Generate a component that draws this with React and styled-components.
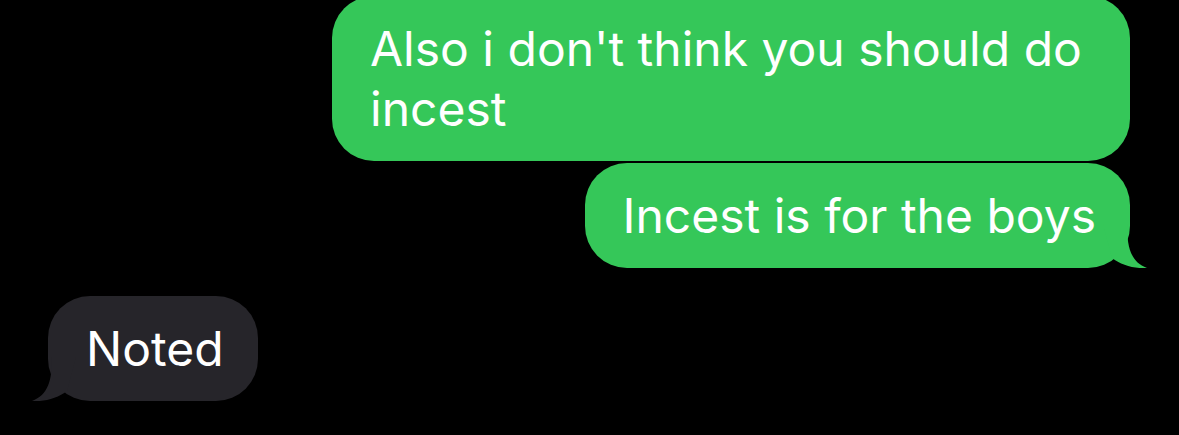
import React from "react";
import styled, { createGlobalStyle } from "styled-components";

const GlobalStyle = createGlobalStyle`
  html, body {
    margin: 0;
    padding: 0;
    background: #000;
  }
`;

const Thread = styled.div`
  width: 1179px;
  height: 435px;
  overflow: hidden;
  background: #000;
  display: flex;
  flex-direction: column;
  font-family: Inter, "Liberation Sans", sans-serif;
`;

const Row = styled.div`
  display: flex;
  justify-content: ${({ $out }) => ($out ? "flex-end" : "flex-start")};
  padding: ${({ $out }) => ($out ? "0 49px 0 0" : "0 0 0 48px")};
  margin-top: ${({ $gap }) => $gap}px;
`;

const Bubble = styled.div`
  position: relative;
  box-sizing: border-box;
  max-width: 798px;
  padding: 23px 34px 22px 38px;
  border-radius: 42px;
  background: ${({ $out }) => ($out ? "#35c759" : "#26252a")};
  color: #fff;
  font-size: 48px;
  line-height: 60px;
`;

const Tail = styled.svg`
  position: absolute;
  bottom: 0;
  width: 44px;
  height: 44px;
  ${({ $out }) => ($out ? "right: -17px;" : "left: -16px; transform: scaleX(-1);")}
`;

const BubbleTail = ({ out }) => (
  <Tail $out={out} viewBox="0 0 44 44">
    <path
      d="M0 0 H24 C24 24 28 38 44 44 C32 45 18 41 9 34 Z"
      fill={out ? "#35c759" : "#26252a"}
    />
  </Tail>
);

export default function App() {
  return (
    <>
      <GlobalStyle />
      <Thread>
        <Row $out $gap={-4}>
          <Bubble $out>Also i don't think you should do incest</Bubble>
        </Row>
        <Row $out $gap={2}>
          <Bubble $out>
            Incest is for the boys
            <BubbleTail out />
          </Bubble>
        </Row>
        <Row $gap={28}>
          <Bubble>
            Noted
            <BubbleTail />
          </Bubble>
        </Row>
      </Thread>
    </>
  );
}
